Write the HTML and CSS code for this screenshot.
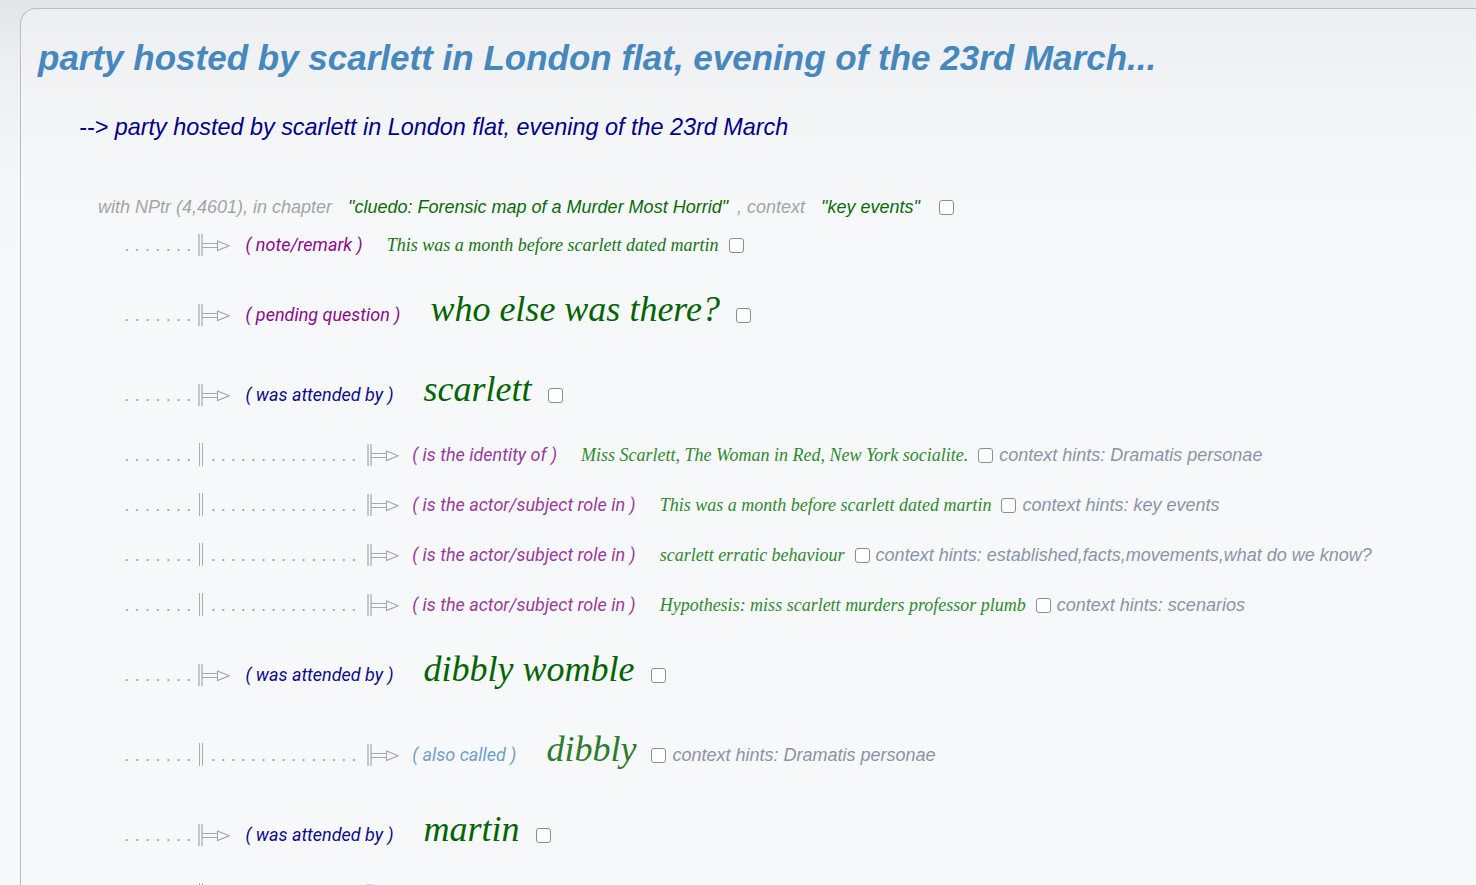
FILE: index.html
```html
<!DOCTYPE html>
<html>
<head>
<meta charset="utf-8">
<title>party hosted by scarlett</title>
<link rel="stylesheet" href="styles.css">
</head>
<body>
<svg class="defs" width="0" height="0" aria-hidden="true">
  <symbol id="arr" viewBox="0 0 32 22">
    <path d="M1 0V22M4 0V22" stroke="#a2a7b0" stroke-width="1.2" fill="none"/>
    <path d="M4 9.5H20M4 13.5H20" stroke="#a2a7b0" stroke-width="1.2" fill="none"/>
    <path d="M19.5 7L31 11.8L19.5 16.6Z" stroke="#a2a7b0" stroke-width="1.1" fill="#f7f8fa"/>
  </symbol>
</svg>
<div class="panel">
  <h1 class="title">party hosted by scarlett in London flat, evening of the 23rd March...</h1>
  <h2 class="subtitle">--&gt; party hosted by scarlett in London flat, evening of the 23rd March</h2>
  <div class="meta"><span class="m-gray">with NPtr (4,4601), in chapter</span><span class="m-green">"cluedo: Forensic map of a Murder Most Horrid"</span><span class="m-gray m-ctx">, context</span><span class="m-green">"key events"</span><input type="checkbox" class="cb cb-meta"></div>
  <div class="rows">
    <div class="row"><span class="dots">.......</span><svg class="arrow"><use href="#arr"/></svg><span class="label lab-purple">( note/remark )</span><span class="content c-note">This was a month before scarlett dated martin</span><input type="checkbox" class="cb cb-sm"></div>
    <div class="row big"><span class="dots">.......</span><svg class="arrow"><use href="#arr"/></svg><span class="label lab-purple">( pending question )</span><span class="content c-big">who else was there?</span><input type="checkbox" class="cb cb-big"></div>
    <div class="row big"><span class="dots">.......</span><svg class="arrow"><use href="#arr"/></svg><span class="label lab-navy">( was attended by )</span><span class="content c-big">scarlett</span><input type="checkbox" class="cb cb-big"></div>
    <div class="row"><span class="dots">.......</span><span class="vbar"></span><span class="dots dots2">...............</span><svg class="arrow arrow2"><use href="#arr"/></svg><span class="label label2 lab-nest">( is the identity of )</span><span class="content c-nest">Miss Scarlett, The Woman in Red, New York socialite.</span><input type="checkbox" class="cb cb-sm"><span class="hint">context hints: Dramatis personae</span></div>
    <div class="row"><span class="dots">.......</span><span class="vbar"></span><span class="dots dots2">...............</span><svg class="arrow arrow2"><use href="#arr"/></svg><span class="label label2 lab-nest">( is the actor/subject role in )</span><span class="content c-nest">This was a month before scarlett dated martin</span><input type="checkbox" class="cb cb-sm"><span class="hint">context hints: key events</span></div>
    <div class="row"><span class="dots">.......</span><span class="vbar"></span><span class="dots dots2">...............</span><svg class="arrow arrow2"><use href="#arr"/></svg><span class="label label2 lab-nest">( is the actor/subject role in )</span><span class="content c-nest">scarlett erratic behaviour</span><input type="checkbox" class="cb cb-sm"><span class="hint">context hints: established,facts,movements,what do we know?</span></div>
    <div class="row"><span class="dots">.......</span><span class="vbar"></span><span class="dots dots2">...............</span><svg class="arrow arrow2"><use href="#arr"/></svg><span class="label label2 lab-nest">( is the actor/subject role in )</span><span class="content c-nest">Hypothesis: miss scarlett murders professor plumb</span><input type="checkbox" class="cb cb-sm"><span class="hint">context hints: scenarios</span></div>
    <div class="row big"><span class="dots">.......</span><svg class="arrow"><use href="#arr"/></svg><span class="label lab-navy">( was attended by )</span><span class="content c-big">dibbly womble</span><input type="checkbox" class="cb cb-big"></div>
    <div class="row big"><span class="dots">.......</span><span class="vbar"></span><span class="dots dots2">...............</span><svg class="arrow arrow2"><use href="#arr"/></svg><span class="label label2 lab-light">( also called )</span><span class="content c-big c-alias">dibbly</span><input type="checkbox" class="cb cb-alias"><span class="hint">context hints: Dramatis personae</span></div>
    <div class="row big"><span class="dots">.......</span><svg class="arrow"><use href="#arr"/></svg><span class="label lab-navy">( was attended by )</span><span class="content c-big">martin</span><input type="checkbox" class="cb cb-big"></div>
    <div class="row"><span class="dots">.......</span><span class="vbar"></span><span class="dots dots2">...............</span><svg class="arrow arrow2"><use href="#arr"/></svg><span class="label label2 lab-nest">( is the actor/subject role in )</span><span class="content c-nest">This was a month before scarlett dated martin</span><input type="checkbox" class="cb cb-sm"><span class="hint">context hints: key events</span></div>
  </div>
</div>
</body>
</html>
```

FILE: styles.css
```css
html, body {
  margin: 0;
  padding: 0;
  height: 100%;
  overflow: hidden;
}

body {
  background: linear-gradient(#e4e5e7 0px, #eceef0 60px, #f4f5f7 160px, #f7f8fa 260px);
  font-family: "Liberation Sans", Arial, sans-serif;
}

.defs {
  position: absolute;
  width: 0;
  height: 0;
  overflow: hidden;
}

.panel {
  margin: 8px 0 0 20px;
  border-top: 1px solid #bcbdbf;
  border-left: 1px solid #bcbdbf;
  border-top-left-radius: 16px;
  background: linear-gradient(#eceef1 0px, #f3f4f6 90px, #f7f8fa 200px);
  padding: 28px 0 0 16px;
  min-height: 1000px;
}

.title {
  margin: 0 0 0 1px;
  font-family: "Liberation Sans", Arial, sans-serif;
  font-style: italic;
  font-weight: bold;
  font-size: 35px;
  line-height: 42px;
  color: #4688be;
  white-space: nowrap;
}

.subtitle {
  margin: 33px 0 0 42px;
  font-family: "Liberation Sans", Arial, sans-serif;
  font-style: italic;
  font-weight: normal;
  font-size: 23.4px;
  line-height: 30px;
  color: #00008a;
  white-space: nowrap;
}

.meta {
  margin: 52px 0 0 61px;
  font-family: "Liberation Sans", Arial, sans-serif;
  font-style: italic;
  font-size: 18px;
  line-height: 26px;
  white-space: nowrap;
}

.m-gray {
  color: #a4a4a4;
}

.m-green {
  color: #0a6a0a;
  margin-left: 16px;
}

.m-ctx {
  margin-left: 9px;
}

.cb {
  -webkit-appearance: none;
  appearance: none;
  box-sizing: border-box;
  width: 15px;
  height: 15px;
  margin: 0 3px 0 0;
  border: 1px solid #8c8c96;
  border-radius: 3px;
  background: #ffffff;
  vertical-align: -2px;
}

.cb-meta {
  margin-left: 19px;
}

.cb-sm {
  margin-left: 10px;
}

.cb-big {
  margin-left: 16px;
}

.cb-alias {
  margin-left: 15px;
}

.rows {
  margin-left: 87.5px;
}

.row {
  height: 50px;
  line-height: 50px;
  font-family: Roboto, "Liberation Sans", sans-serif;
  font-style: italic;
  font-size: 18px;
  white-space: nowrap;
}

.row.big {
  height: 80px;
  box-sizing: border-box;
  padding-top: 10px;
  line-height: 70px;
}

.dots {
  color: #9aa1aa;
  font-style: normal;
  letter-spacing: 5.6px;
}

.dots2 {
  margin-left: 8px;
  letter-spacing: 5.3px;
}

.vbar {
  display: inline-block;
  width: 2px;
  height: 23px;
  border-left: 1.3px solid #a9aeb5;
  border-right: 1.3px solid #a9aeb5;
  vertical-align: -5px;
  margin-left: 2px;
}

.arrow {
  width: 32px;
  height: 22px;
  vertical-align: -5px;
  margin-left: 1px;
}

.arrow2 {
  margin-left: 5px;
}

.label {
  margin-left: 15.5px;
}

.label2 {
  margin-left: 13.5px;
}

.lab-purple {
  color: #8b0a8b;
}

.lab-navy {
  color: #0c0c8c;
}

.lab-nest {
  color: #9a3a9a;
}

.lab-light {
  color: #6e9fcb;
}

.content {
  font-family: "Liberation Serif", "Times New Roman", serif;
  font-style: italic;
}

.c-note {
  font-size: 18px;
  color: #137513;
  margin-left: 24px;
}

.c-nest {
  font-size: 18px;
  color: #2f8a2f;
  margin-left: 24px;
}

.c-big {
  font-size: 36px;
  line-height: 1;
  color: #006400;
  margin-left: 30px;
}

.c-alias {
  color: #2c7c2c;
}

.hint {
  font-family: "Liberation Sans", Arial, sans-serif;
  font-style: italic;
  font-size: 18px;
  color: #8a94a5;
  margin-left: 3px;
}
```
